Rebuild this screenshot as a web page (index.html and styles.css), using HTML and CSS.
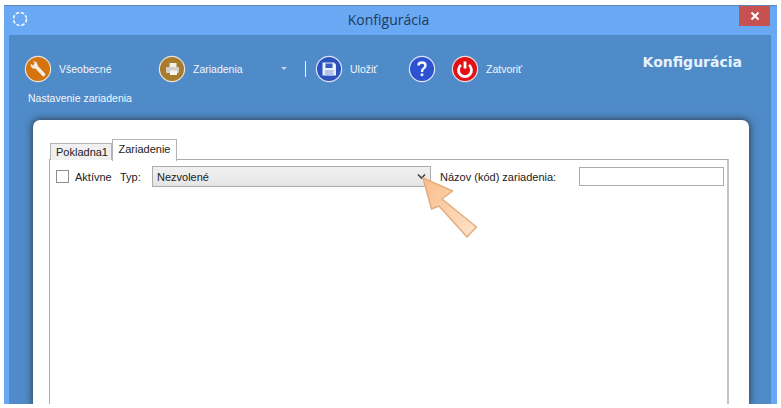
FILE: index.html
```html
<html>
  <head>
    <link rel="stylesheet" href="styles.css">
    <title>Konfigurácia</title>
  </head>
  <body>
    <div class="window">
      <div class="titlebar">
        <svg class="app-icon" width="16" height="16" viewBox="0 0 16 16">
          <circle cx="8" cy="8" r="6.5" fill="none" stroke="#f4f8fe" stroke-width="1.6" stroke-dasharray="3.5 1.6"/>
        </svg>
        <div class="window-title">Konfigurácia</div>
        <div class="close-button">
          <svg width="10" height="10" viewBox="0 0 10 10">
            <path d="M1.5 1.5 L8.5 8.5 M8.5 1.5 L1.5 8.5" stroke="#fff" stroke-width="2"/>
          </svg>
        </div>
      </div>
      <div class="main">
        <div class="header">
          <div class="toolbar">
            <div class="tool tool-general">
              <svg class="icon" width="28" height="28" viewBox="0 0 28 28">
                <circle cx="14" cy="14" r="12.6" fill="#d5730f" stroke="#e9e4da" stroke-width="1.2"/>
                <path d="M11 10.5 L19.5 19.5" stroke="#f5ebdf" stroke-width="3.6" stroke-linecap="round"/>
                <path d="M6.8 8.8 L9.6 11 L11.4 9.4 L9.2 6.6 Q12.8 6 13.6 9.4 Q13.8 11.6 12 13 Q9.8 14 8 13 Q6.2 11.4 6.8 8.8 Z" fill="#f5ebdf"/>
              </svg>
              <span class="tool-label">Všeobecné</span>
            </div>
            <div class="tool tool-devices">
              <svg class="icon" width="28" height="28" viewBox="0 0 28 28">
                <circle cx="14" cy="14" r="12.6" fill="#a97b2c" stroke="#e9e4da" stroke-width="1.2"/>
                <rect x="11.5" y="8" width="7" height="5" fill="#f2efe8"/>
                <rect x="8" y="12" width="13" height="6" rx="1" fill="#d3cfc9"/>
                <rect x="12" y="15.5" width="7" height="4.5" fill="#f7f5f0"/>
              </svg>
              <span class="tool-label">Zariadenia</span>
            </div>
            <div class="caret"></div>
            <div class="separator"></div>
            <div class="tool tool-save">
              <svg class="icon" width="28" height="28" viewBox="0 0 28 28">
                <circle cx="14" cy="14" r="12.6" fill="#2c52bd" stroke="#dfe6f5" stroke-width="1.2"/>
                <path d="M7.5 7.5 H19 L21 9.5 V20.5 H7.5 Z" fill="#e8eefa"/>
                <rect x="10.5" y="8.5" width="7" height="4.5" fill="#3a5cc0"/>
                <rect x="10" y="15" width="8.5" height="5.5" fill="#b3c3e8"/>
              </svg>
              <span class="tool-label">Uložiť</span>
            </div>
            <div class="tool tool-help">
              <svg class="icon" width="28" height="28" viewBox="0 0 28 28">
                <circle cx="14" cy="14" r="12.6" fill="#2c52d0" stroke="#dfe6f5" stroke-width="1.2"/>
                <path d="M10.5 10.5 Q10.5 7.5 14 7.5 Q17.5 7.5 17.5 10.5 Q17.5 12.5 15.5 13.5 Q14 14.3 14 17" fill="none" stroke="#f4f6fc" stroke-width="2.4"/>
                <rect x="12.7" y="18.5" width="2.6" height="2.6" fill="#f4f6fc"/>
              </svg>
            </div>
            <div class="tool tool-close">
              <svg class="icon" width="28" height="28" viewBox="0 0 28 28">
                <circle cx="14" cy="14" r="12.6" fill="#e01216" stroke="#f0dcdc" stroke-width="1.2"/>
                <path d="M10 10 A6.5 6.5 0 1 0 18 10" fill="none" stroke="#fff" stroke-width="2.8"/>
                <path d="M14 6.5 V13.5" stroke="#fff" stroke-width="2.8"/>
              </svg>
              <span class="tool-label">Zatvoriť</span>
            </div>
          </div>
          <div class="header-title">Konfigurácia</div>
        </div>
        <div class="subtitle">Nastavenie zariadenia</div>
        <div class="card">
          <div class="tabs">
            <div class="tab">Pokladna1</div>
            <div class="tab tab-active">Zariadenie</div>
          </div>
          <div class="panel">
            <div class="form-row">
              <div class="checkbox"></div>
              <span class="active-label">Aktívne</span>
              <span class="type-label">Typ:</span>
              <div class="select">
                <span>Nezvolené</span>
                <svg width="9" height="7" viewBox="0 0 9 7">
                  <path d="M1 1.5 L4.5 5 L8 1.5" fill="none" stroke="#444" stroke-width="1.6"/>
                </svg>
              </div>
              <span class="name-label">Názov (kód) zariadenia:</span>
              <div class="text-input"></div>
            </div>
          </div>
        </div>
      </div>
    </div>
    <svg class="arrow" width="60" height="66" viewBox="0 0 60 66">
      <defs>
        <linearGradient id="arrow-fill" x1="0" y1="0" x2="1" y2="1">
          <stop offset="0" stop-color="#fbbd8a"/>
          <stop offset="1" stop-color="#fde3cb"/>
        </linearGradient>
      </defs>
      <path d="M3 3 L32.5 16 L22 24 L56.5 52 L47 62 L19 31 L11.5 34 Z" fill="url(#arrow-fill)" stroke="#e3ad7d" stroke-width="1.5" stroke-linejoin="round"/>
    </svg>
  </body>
</html>
```

FILE: styles.css
```css
html, body {
  margin: 0;
  padding: 0;
  height: 408px;
  overflow: hidden;
  background: #fff;
}

body {
  position: relative;
  font-family: "Liberation Sans", Arial, sans-serif;
  font-size: 11px;
  color: #222;
}

.window {
  margin: 5px 0 0 4px;
  width: 773px;
  height: 399px;
  display: flex;
  flex-direction: column;
  overflow: hidden;
  background: #69a8f3;
  border-top: 1px solid #5f86b4;
  box-sizing: border-box;
}

.titlebar {
  position: relative;
  height: 29px;
  flex: none;
  display: flex;
  align-items: center;
  justify-content: center;
}

.app-icon {
  position: absolute;
  left: 8px;
  top: 5px;
}

.window-title {
  font-family: "Open Sans", sans-serif;
  font-size: 14px;
  line-height: 16px;
  color: #1f3a5c;
  margin: -2px 0 0 -4px;
}

.close-button {
  position: absolute;
  left: 735px;
  top: 0;
  width: 31px;
  height: 20px;
  background: #c75050;
  display: flex;
  align-items: center;
  justify-content: center;
}

.main {
  flex: 1;
  margin: 0 6px 0 5px;
  background: #4f8bc8;
  display: flex;
  flex-direction: column;
  min-height: 0;
}

.header {
  display: flex;
  justify-content: space-between;
  padding: 20px 29px 0 15px;
  height: 28px;
}

.toolbar {
  display: flex;
  align-items: center;
  height: 28px;
}

.tool {
  display: flex;
  align-items: center;
  flex: none;
}

.tool-label {
  font-size: 10.5px;
  color: #f2f7fc;
  margin-left: 7px;
}

.tool-general .tool-label {
  width: 53px;
}

.tool-devices {
  margin-left: 46px;
}

.tool-devices .tool-label {
  width: 50px;
}

.tool-save {
  margin-left: 9px;
}

.tool-save .tool-label {
  width: 29px;
}

.tool-help {
  margin-left: 29px;
}

.tool-close {
  margin-left: 15px;
}

.caret {
  width: 0;
  height: 0;
  margin: -2px 0 0 38px;
  border-left: 3px solid transparent;
  border-right: 3px solid transparent;
  border-top: 3px solid #c6d7ea;
}

.separator {
  width: 1px;
  height: 16px;
  margin-left: 18px;
  background: #eef4fb;
}

.header-title {
  font-family: "DejaVu Sans", sans-serif;
  font-weight: bold;
  font-size: 14px;
  line-height: 16px;
  color: #e6f2fd;
  margin-top: -1px;
}

.subtitle {
  margin: 8px 0 0 19px;
  height: 15px;
  line-height: 15px;
  font-size: 10.5px;
  color: #f2f7fc;
}

.card {
  flex: 1;
  margin: 14px 22px 0 24px;
  padding: 20px 20px 0 16px;
  background: #fff;
  border-radius: 7px 7px 0 0;
  box-shadow: 0 0 7px 1px rgba(40, 40, 40, 0.75);
  display: flex;
  flex-direction: column;
  min-height: 0;
}

.tabs {
  display: flex;
  align-items: flex-end;
  height: 20px;
  padding-left: 1px;
  margin-bottom: -1px;
  position: relative;
}

.tab {
  width: 62px;
  height: 17px;
  line-height: 17px;
  padding-left: 2px;
  text-align: center;
  background: #f0f0f0;
  border: 1px solid #b4b4b4;
  border-bottom: none;
  box-sizing: border-box;
}

.tab-active {
  width: 65px;
  height: 22px;
  line-height: 19px;
  padding-left: 0;
  background: #fff;
  margin-left: 0;
  margin-bottom: -1px;
}

.panel {
  flex: 1;
  border: 1px solid #aaa;
  border-right: 2px solid #c4c4c4;
  border-bottom: none;
  padding: 6px 0 0 6px;
}

.form-row {
  display: flex;
  align-items: center;
  height: 21px;
}

.checkbox {
  width: 13px;
  height: 13px;
  border: 1px solid #8e8e8e;
  background: #fff;
  box-sizing: border-box;
}

.active-label {
  margin-left: 6px;
  width: 45px;
}

.type-label {
  width: 32px;
}

.select {
  width: 279px;
  height: 21px;
  box-sizing: border-box;
  border: 1px solid #acacac;
  background: linear-gradient(#f0f0f0, #e5e5e5);
  display: flex;
  align-items: center;
  justify-content: space-between;
  padding: 0 4px 0 4px;
}

.name-label {
  margin-left: 9px;
  width: 139px;
}

.text-input {
  width: 145px;
  height: 19px;
  box-sizing: border-box;
  border: 1px solid #ababab;
  background: #fff;
}

.arrow {
  position: absolute;
  left: 420px;
  top: 175px;
}
```
